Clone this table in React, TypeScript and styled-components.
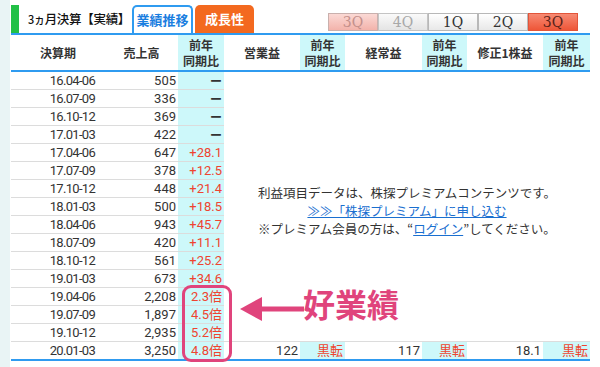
import React from 'react';
import styled, { createGlobalStyle } from 'styled-components';

const GlobalStyle = createGlobalStyle`
  html, body { margin: 0; padding: 0; background: #fff; }
  body {
    font-family: Roboto, "Noto Sans CJK JP", sans-serif;
    color: #333;
  }
`;

const BLUE = '#2f9bf0';
const CYAN = '#cdf8fa';
const RED = '#ef4430';
const PINK = '#e0447c';

type Row = { period: string; sales: string; yoy: string; red?: boolean };

const rows: Row[] = [
  { period: '16.04-06', sales: '505', yoy: '' },
  { period: '16.07-09', sales: '336', yoy: '' },
  { period: '16.10-12', sales: '369', yoy: '' },
  { period: '17.01-03', sales: '422', yoy: '' },
  { period: '17.04-06', sales: '647', yoy: '+28.1', red: true },
  { period: '17.07-09', sales: '378', yoy: '+12.5', red: true },
  { period: '17.10-12', sales: '448', yoy: '+21.4', red: true },
  { period: '18.01-03', sales: '500', yoy: '+18.5', red: true },
  { period: '18.04-06', sales: '943', yoy: '+45.7', red: true },
  { period: '18.07-09', sales: '420', yoy: '+11.1', red: true },
  { period: '18.10-12', sales: '561', yoy: '+25.2', red: true },
  { period: '19.01-03', sales: '673', yoy: '+34.6', red: true },
  { period: '19.04-06', sales: '2,208', yoy: '2.3倍', red: true },
  { period: '19.07-09', sales: '1,897', yoy: '4.5倍', red: true },
  { period: '19.10-12', sales: '2,935', yoy: '5.2倍', red: true },
];

const quarters = [
  { label: '3Q', kind: 'pink' },
  { label: '4Q', kind: 'grey' },
  { label: '1Q', kind: 'plain' },
  { label: '2Q', kind: 'plain' },
  { label: '3Q', kind: 'active' },
] as const;

const widths = [94, 73, 46, 76, 45, 77, 45, 76, 47];

export default function App() {
  return (
    <>
      <GlobalStyle />
      <Page>
        <SideStrip />
        <Panel>
          <TitleBar>
            <GreenMark />
            <Title>
              <small>3ヵ</small>月決算【実績】
            </Title>
            <Tab $active>業績推移</Tab>
            <Tab>成長性</Tab>
            <Quarters>
              {quarters.map((q, i) => (
                <QButton key={i} $kind={q.kind}>
                  {q.label}
                </QButton>
              ))}
            </Quarters>
          </TitleBar>

          <Table>
            <colgroup>
              {widths.map((w, i) => (
                <col key={i} style={{ width: w }} />
              ))}
            </colgroup>
            <thead>
              <tr>
                <Th>決算期</Th>
                <Th>売上高</Th>
                <Th $cyan>前年<br />同期比</Th>
                <Th>営業益</Th>
                <Th $cyan>前年<br />同期比</Th>
                <Th>経常益</Th>
                <Th $cyan>前年<br />同期比</Th>
                <Th>修正1株益</Th>
                <Th $cyan>前年<br />同期比</Th>
              </tr>
            </thead>
            <tbody>
              {rows.map((r, i) => (
                <tr key={r.period}>
                  <PeriodTd>{r.period}</PeriodTd>
                  <Td>{r.sales}</Td>
                  <Td $cyan $red={r.red}>{r.yoy || <Dash>ー</Dash>}</Td>
                  {i === 0 && (
                    <NoticeTd colSpan={6} rowSpan={rows.length}>
                      利益項目データは、株探プレミアムコンテンツです。
                      <br />
                      <Link href="#">≫≫「株探プレミアム」に申し込む</Link>
                      <br />
                      ※プレミアム会員の方は、“<Link href="#">ログイン</Link>”してください。
                    </NoticeTd>
                  )}
                </tr>
              ))}
              <LastRow>
                <PeriodTd>20.01-03</PeriodTd>
                <Td>3,250</Td>
                <Td $cyan $red>4.8倍</Td>
                <Td>122</Td>
                <Td $cyan $red>黒転</Td>
                <Td>117</Td>
                <Td $cyan $red>黒転</Td>
                <Td>18.1</Td>
                <Td $cyan $red>黒転</Td>
              </LastRow>
            </tbody>
          </Table>
        </Panel>

        <Highlight />
        <Arrow width="66" height="32" viewBox="0 0 66 32">
          <polygon points="2,15 24,3 24,27" fill={PINK} />
          <rect x="22" y="12.5" width="44" height="5" fill={PINK} />
        </Arrow>
        <Callout>好業績</Callout>
      </Page>
    </>
  );
}

const Page = styled.div`
  position: relative;
  display: flex;
  width: 600px;
  height: 367px;
  overflow: hidden;
  background: #fff;
`;

const SideStrip = styled.div`
  width: 10px;
  flex: none;
  background: #e9f4f5;
`;

const Panel = styled.div`
  width: 580px;
  padding: 5px 0 0 1px;
  box-sizing: border-box;
`;

const TitleBar = styled.div`
  display: flex;
  align-items: flex-end;
  height: 28px;
  border-bottom: 2px solid ${BLUE};
`;

const GreenMark = styled.div`
  width: 8px;
  height: 28px;
  background: #22c046;
`;

const Title = styled.div`
  width: 113px;
  box-sizing: border-box;
  padding-left: 9px;
  line-height: 28px;
  font-family: "Noto Sans CJK JP", sans-serif;
  font-size: 12.5px;
  font-weight: 500;
  color: #111;
  letter-spacing: -0.3px;
  small {
    font-size: 11px;
  }
`;

const Tab = styled.div<{ $active?: boolean }>`
  box-sizing: border-box;
  width: ${(p) => (p.$active ? 61 : 59)}px;
  height: 28px;
  margin-left: ${(p) => (p.$active ? 0 : 2)}px;
  border-radius: 5px 5px 0 0;
  border: ${(p) => (p.$active ? `2px solid ${BLUE}` : 'none')};
  border-bottom: none;
  background: ${(p) => (p.$active ? '#fff' : '#f3691f')};
  color: ${(p) => (p.$active ? '#1a7ee0' : '#fff')};
  font-family: "Noto Sans CJK JP", sans-serif;
  font-weight: bold;
  font-size: 13px;
  line-height: ${(p) => (p.$active ? 26 : 28)}px;
  text-align: center;
`;

const Quarters = styled.div`
  display: flex;
  align-self: flex-start;
  margin: 8px 0 0 74px;
`;

const qStyles = {
  pink: 'background: linear-gradient(#fbd9d5, #f3b3ab); color: #c4908b; border-color: #c9b0ad;',
  grey: 'background: linear-gradient(#fafafa, #e4e4e4); color: #a8a8a8; border-color: #c4c4c4;',
  plain: 'background: linear-gradient(#ffffff, #e8e8e8); color: #333; border-color: #b8b8b8;',
  active: 'background: linear-gradient(#f78a73, #ee5638); color: #5a2219; border-color: #e2553a;',
};

const QButton = styled.div<{ $kind: keyof typeof qStyles }>`
  box-sizing: border-box;
  width: 50px;
  height: 18px;
  border: 1px solid;
  ${(p) => qStyles[p.$kind]}
  font-family: "DejaVu Serif", serif;
  font-size: 14px;
  line-height: 16px;
  text-align: center;
`;

const Table = styled.table`
  width: 579px;
  table-layout: fixed;
  border-collapse: collapse;
  font-size: 13px;
`;

const Th = styled.th<{ $cyan?: boolean }>`
  height: 35px;
  padding: 0;
  background: ${(p) => (p.$cyan ? CYAN : '#fff')};
  border-bottom: 2px solid ${BLUE};
  font-family: "Noto Sans CJK JP", sans-serif;
  font-size: 12px;
  line-height: 16px;
  font-weight: bold;
  color: #333;
  text-align: center;
`;

const Td = styled.td<{ $cyan?: boolean; $red?: boolean }>`
  height: 17px;
  padding: 0 2px 0 0;
  background: ${(p) => (p.$cyan ? CYAN : '#fff')};
  border-bottom: 1px solid #dcdcdc;
  color: ${(p) => (p.$red ? RED : '#333')};
  line-height: 17px;
  text-align: right;
  white-space: nowrap;
`;

const PeriodTd = styled(Td)`
  padding-right: 10px;
  letter-spacing: -0.7px;
`;

const Dash = styled.span`
  display: inline-block;
  vertical-align: top;
  height: 17px;
  line-height: 17px;
  font-family: "Noto Sans CJK JP", sans-serif;
  font-size: 12px;
  font-weight: bold;
  color: #333;
`;

const NoticeTd = styled.td`
  padding: 8px 0 0;
  background: #fff;
  border-bottom: 1px solid #dcdcdc;
  font-family: "Noto Sans CJK JP", sans-serif;
  font-size: 12.5px;
  line-height: 18px;
  color: #333;
  text-align: center;
  vertical-align: middle;
`;

const Link = styled.a`
  color: #1a6fd0;
  text-decoration: underline;
`;

const LastRow = styled.tr`
  td {
    border-bottom: 2px solid ${BLUE};
  }
`;

const Highlight = styled.div`
  position: absolute;
  left: 182px;
  top: 285px;
  width: 50px;
  height: 77px;
  box-sizing: border-box;
  border: 3px solid ${PINK};
  border-radius: 9px;
`;

const Arrow = styled.svg`
  position: absolute;
  left: 238px;
  top: 294px;
`;

const Callout = styled.div`
  position: absolute;
  left: 303px;
  top: 283px;
  font-family: "Noto Sans CJK JP", sans-serif;
  font-weight: bold;
  font-size: 32px;
  line-height: 40px;
  color: ${PINK};
`;
